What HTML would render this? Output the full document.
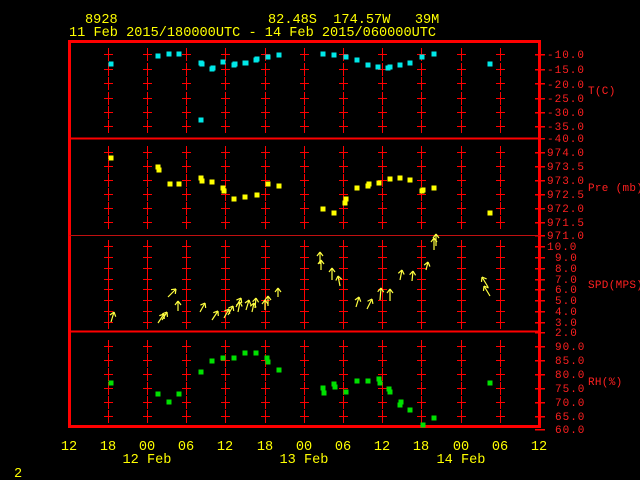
<!DOCTYPE html>
<html><head><meta charset="utf-8"><style>
html,body{margin:0;padding:0;background:#000;width:640px;height:480px;overflow:hidden}
svg{display:block}
text{font-family:"Liberation Mono","DejaVu Sans Mono",monospace;white-space:pre}
.y{fill:#ffff00;font-size:13.6px}
.r{fill:#ff2020;font-size:11px;letter-spacing:1px}
.u{fill:#ff2020;font-size:11px;letter-spacing:0.3px}
</style></head><body>
<svg id="s" width="640" height="480" viewBox="0 0 640 480" xmlns="http://www.w3.org/2000/svg" xml:space="preserve">
<g id="grid" stroke="#ff0000" stroke-width="1" fill="none"></g>
<rect x="69.5" y="41.5" width="470" height="385" fill="none" stroke="#ff0000" stroke-width="3"/>
<line x1="69" y1="138.5" x2="540" y2="138.5" stroke="#ff0000" stroke-width="2"/>
<line x1="69" y1="235.5" x2="540" y2="235.5" stroke="#c01010" stroke-width="1"/>
<line x1="69" y1="331.5" x2="540" y2="331.5" stroke="#ff0000" stroke-width="2"/>
<g id="pts"></g>
<g id="arr" stroke="#ffff40" stroke-width="1.2" fill="none"></g>
<text class="y" x="85" y="23">8928</text>
<text class="y" x="268" y="23">82.48S  174.57W   39M</text>
<text class="y" x="69" y="36">11 Feb 2015/180000UTC - 14 Feb 2015/060000UTC</text>
<g class="r">
<text x="547" y="58">-10.0</text><text x="547" y="73">-15.0</text><text x="547" y="88">-20.0</text><text x="547" y="102">-25.0</text><text x="547" y="116">-30.0</text><text x="547" y="130">-35.0</text><text x="547" y="142">-40.0</text>
<text x="547" y="156">974.0</text><text x="547" y="170">973.5</text><text x="547" y="184">973.0</text><text x="547" y="198">972.5</text><text x="547" y="212">972.0</text><text x="547" y="226">971.5</text><text x="547" y="239">971.0</text>
<text x="547" y="250">10.0</text><text x="555" y="261">9.0</text><text x="555" y="272">8.0</text><text x="555" y="283">7.0</text><text x="555" y="293">6.0</text><text x="555" y="304">5.0</text><text x="555" y="315">4.0</text><text x="555" y="326">3.0</text><text x="555" y="336">2.0</text>
<text x="555" y="350">90.0</text><text x="555" y="364">85.0</text><text x="555" y="378">80.0</text><text x="555" y="392">75.0</text><text x="555" y="406">70.0</text><text x="555" y="420">65.0</text><text x="555" y="433">60.0</text>
</g>
<g class="u">
<text x="588" y="94">T(C)</text><text x="588" y="191">Pre (mb)</text><text x="588" y="288">SPD(MPS)</text><text x="588" y="385">RH(%)</text>
</g>
<g class="y" text-anchor="middle">
<text x="69" y="450">12</text><text x="108" y="450">18</text><text x="147" y="450">00</text><text x="186" y="450">06</text><text x="225" y="450">12</text><text x="265" y="450">18</text><text x="304" y="450">00</text><text x="343" y="450">06</text><text x="382" y="450">12</text><text x="421" y="450">18</text><text x="461" y="450">00</text><text x="500" y="450">06</text><text x="539" y="450">12</text>
<text x="147" y="463">12 Feb</text><text x="304" y="463">13 Feb</text><text x="461" y="463">14 Feb</text>
</g>
<text class="y" x="14" y="477">2</text>
</svg>
<script>
var NS="http://www.w3.org/2000/svg";
function el(p,n,a){var e=document.createElementNS(NS,n);for(var k in a)e.setAttribute(k,a[k]);p.appendChild(e);}
var g=document.getElementById('grid');
var xs=[108,147,186,225,265,304,343,382,421,461,500];
var ty=[54,69,83,98,112,126,152,166,180,194,208,222,246,257,268,279,289,300,311,322,346,360,374,388,402,416];
xs.forEach(function(x){ty.forEach(function(y){
 el(g,'rect',{x:x,y:y-6,width:1,height:13,fill:'#ff0000',stroke:'none'});
 el(g,'rect',{x:x-4,y:y,width:9,height:1,fill:'#ff0000',stroke:'none'});
});});
[54,69,83,98,112,126,138,152,166,180,194,208,222,235,246,257,268,279,289,300,311,322,332,346,360,374,388,402,416,429].forEach(function(y){
 el(g,'rect',{x:535,y:y,width:10,height:1.5,fill:'#ff0000',stroke:'none'});
});
var p=document.getElementById('pts');
function pts(a,c){a.forEach(function(q){el(p,'rect',{x:q[0]-2.5,y:q[1]-2.5,width:5,height:5,fill:c});});}
pts([[111,64],[158,56],[169,54],[179,54],[201,63],[202,64],[212,69],[213,68],[223,62],[234,65],[235,64],[245,63],[246,63],[256,60],[257,59],[268,57],[279,55],[201,120],[323,54],[334,55],[346,57],[357,60],[368,65],[378,67],[388,68],[390,67],[400,65],[410,63],[422,57],[434,54],[490,64]],'#00e8e8');
pts([[111,158],[158,167],[159,170],[170,184],[179,184],[201,178],[202,181],[212,182],[223,188],[224,191],[234,199],[245,197],[257,195],[268,184],[279,186],[323,209],[334,213],[345,203],[346,199],[357,188],[368,186],[369,184],[379,183],[390,179],[400,178],[410,180],[422,191],[423,190],[434,188],[490,213]],'#ffff00');
pts([[111,383],[158,394],[169,402],[179,394],[201,372],[212,361],[223,358],[234,358],[245,353],[256,353],[267,358],[268,362],[279,370],[323,388],[324,393],[334,384],[335,387],[346,392],[357,381],[368,381],[379,379],[380,383],[389,389],[390,392],[400,405],[401,402],[410,410],[423,425],[434,418],[490,383]],'#00e000');
var ar=document.getElementById('arr');
function arrow(x,y,dx,dy){var L=Math.hypot(dx,dy),ux=dx/L,uy=dy/L;
 var hx=x+dx,hy=y+dy;
 el(ar,'line',{x1:x,y1:y,x2:hx,y2:hy});
 el(ar,'line',{x1:hx,y1:hy,x2:hx-4*ux+3*uy,y2:hy-4*uy-3*ux});
 el(ar,'line',{x1:hx,y1:hy,x2:hx-4*ux-3*uy,y2:hy-4*uy+3*ux});}
[[111,322,3,-10],[158,323,6,-9],[162,320,5,-8],[168,297,8,-8],[178,311,0,-10],[200,312,5,-9],[212,320,6,-9],[224,318,5,-9],[228,315,5,-9],[236,307,5,-9],[238,312,2,-10],[246,310,3,-10],[252,312,2,-9],[255,308,1,-10],[265,310,0,-10],[268,306,0,-10],[278,297,0,-9],[320,264,0,-12],[321,270,0,-10],[332,280,0,-12],[340,286,-2,-10],[356,307,3,-10],[367,309,5,-10],[380,300,1,-12],[390,301,0,-12],[400,280,2,-10],[412,281,1,-10],[426,270,2,-8],[434,250,0,-12],[436,246,0,-12],[488,287,-6,-10],[490,296,-6,-10]].forEach(function(a){arrow(a[0],a[1],a[2],a[3]);});
</script>
</body></html>
